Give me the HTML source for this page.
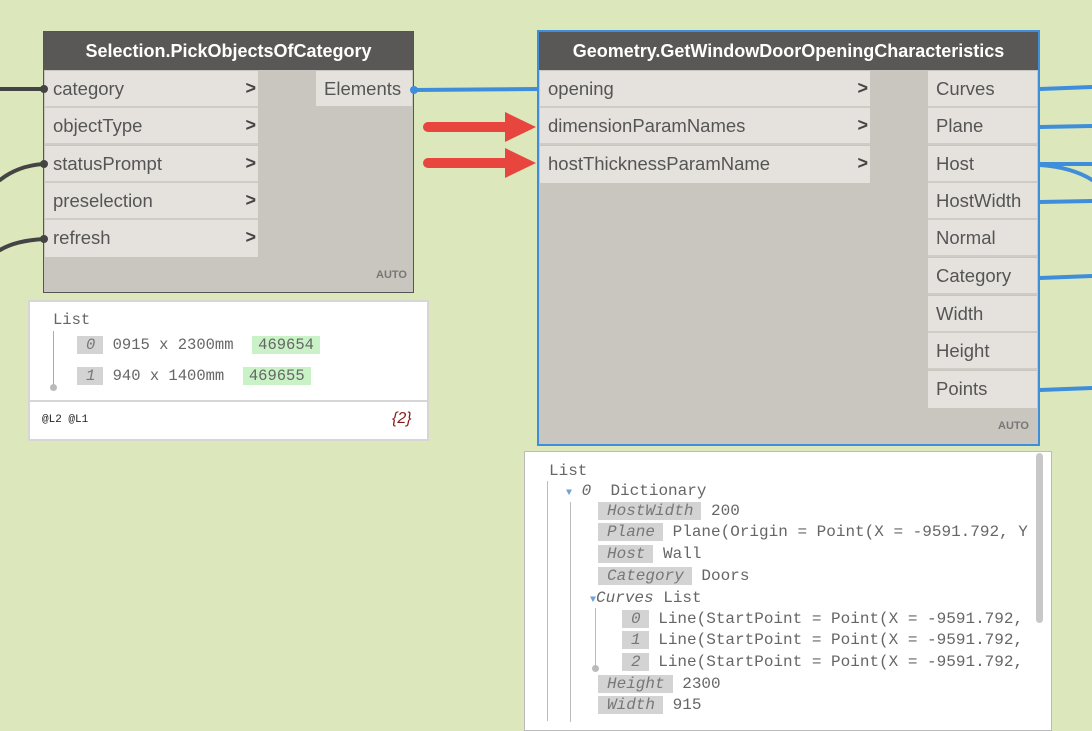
<!DOCTYPE html>
<html><head><meta charset="utf-8"><style>
*{margin:0;padding:0;box-sizing:border-box}
body{width:1092px;height:717px;background:#dce7bb;position:relative;overflow:hidden;font-family:"Liberation Sans",sans-serif}
.a{position:absolute}
.hdr{background:#5a5856;color:#fff;font-weight:bold;font-size:18px;text-align:center;line-height:38px;white-space:nowrap}
.row{position:absolute;background:#e5e2dd;color:#555;font-size:18.5px;line-height:35px;padding-left:8px;white-space:nowrap;border-bottom:2px solid #cfcbc5}
.chev{position:absolute;right:2px;top:0;font-weight:bold;color:#444;font-size:18px}
.body{background:#c9c5bf}
.auto{position:absolute;font-size:11px;font-weight:bold;color:#777}
.mono{font-family:"Liberation Mono",monospace;color:#666;font-size:16px;white-space:nowrap}
.key{background:#d3d3d3;font-style:italic;color:#777;padding:0 8px 0 9px}
.grn{background:#c9f2c6;padding:0 6px}
</style></head><body>
<svg class="a" style="left:0;top:0" width="1092" height="717">
<g fill="none" stroke-linecap="round">
<path d="M0 89 L44 89" stroke="#444" stroke-width="4"/>
<path d="M0 180 C10 172 25 165 44 164" stroke="#444" stroke-width="4"/>
<path d="M0 250 C10 244 25 240 44 239" stroke="#444" stroke-width="4"/>
<path d="M413 90 L538 89" stroke="#3e8edb" stroke-width="4"/>
<path d="M1040 89 L1092 87" stroke="#3e8edb" stroke-width="4"/>
<path d="M1040 127 L1092 126" stroke="#3e8edb" stroke-width="4"/>
<path d="M1040 164 L1092 164" stroke="#3e8edb" stroke-width="4"/>
<path d="M1040 165 C1060 166 1080 172 1092 180" stroke="#3e8edb" stroke-width="4"/>
<path d="M1040 202 L1092 201" stroke="#3e8edb" stroke-width="4"/>
<path d="M1040 278 L1092 276" stroke="#3e8edb" stroke-width="4"/>
<path d="M1040 390 L1092 388" stroke="#3e8edb" stroke-width="4"/>
<path d="M428 127 L505 127" stroke="#e8453f" stroke-width="10"/>
<path d="M428 163 L505 163" stroke="#e8453f" stroke-width="10"/>
</g>
<polygon points="505,112 536,127 505,142" fill="#e8453f"/>
<polygon points="505,148 536,163 505,178" fill="#e8453f"/>
</svg>

<div class="a body" style="left:43px;top:31px;width:371px;height:262px;border:1px solid #555"></div>
<div class="a hdr" style="left:44px;top:32px;width:369px">Selection.PickObjectsOfCategory</div>
<div class="row" style="left:45px;top:71px;width:213px">category<span class="chev">&gt;</span></div>
<div class="row" style="left:45px;top:108px;width:213px">objectType<span class="chev">&gt;</span></div>
<div class="row" style="left:45px;top:146px;width:213px">statusPrompt<span class="chev">&gt;</span></div>
<div class="row" style="left:45px;top:183px;width:213px">preselection<span class="chev">&gt;</span></div>
<div class="row" style="left:45px;top:220px;width:213px;border-bottom:none;height:37px">refresh<span class="chev">&gt;</span></div>
<div class="row" style="left:316px;top:71px;width:96px;border:none;height:35px">Elements</div>
<div class="auto" style="left:376px;top:269px">AUTO</div>
<div class="a" style="left:40px;top:85px;width:8px;height:8px;border-radius:4px;background:#444"></div>
<div class="a" style="left:40px;top:160px;width:8px;height:8px;border-radius:4px;background:#444"></div>
<div class="a" style="left:40px;top:235px;width:8px;height:8px;border-radius:4px;background:#444"></div>
<div class="a" style="left:410px;top:86px;width:8px;height:8px;border-radius:4px;background:#3e8edb"></div>

<div class="a" style="left:28px;top:300px;width:401px;height:141px;background:#fff;border:2px solid #d6d6d6"></div>
<div class="a" style="left:30px;top:400px;width:397px;height:2px;background:#d6d6d6"></div>
<div class="a mono" style="left:53px;top:311px;font-size:15.5px">List</div>
<div class="a" style="left:53px;top:331px;width:1px;height:54px;background:#aaa"></div>
<div class="a" style="left:50px;top:384px;width:7px;height:7px;border-radius:4px;background:#bbb"></div>
<div class="a mono" style="left:77px;top:336px;font-size:15.5px"><span class="key">0</span> 0915 x 2300mm&nbsp; <span class="grn">469654</span></div>
<div class="a mono" style="left:77px;top:367px;font-size:15.5px"><span class="key">1</span> 940 x 1400mm&nbsp; <span class="grn">469655</span></div>
<div class="a" style="left:42px;top:414px;font-family:'Liberation Mono',monospace;font-size:11px;color:#222">@L2 @L1</div>
<div class="a" style="left:392px;top:410px;font-size:16px;font-style:italic;color:#8a1a1a">{2}</div>

<div class="a body" style="left:537px;top:30px;width:503px;height:416px;border:2px solid #3e8edb"></div>
<div class="a hdr" style="left:539px;top:32px;width:499px">Geometry.GetWindowDoorOpeningCharacteristics</div>
<div class="row" style="left:540px;top:71px;width:330px">opening<span class="chev">&gt;</span></div>
<div class="row" style="left:540px;top:108px;width:330px">dimensionParamNames<span class="chev">&gt;</span></div>
<div class="row" style="left:540px;top:146px;width:330px;border-bottom:none;height:37px">hostThicknessParamName<span class="chev">&gt;</span></div>
<div class="row" style="left:928px;top:71px;width:109px">Curves</div>
<div class="row" style="left:928px;top:108px;width:109px">Plane</div>
<div class="row" style="left:928px;top:146px;width:109px">Host</div>
<div class="row" style="left:928px;top:183px;width:109px">HostWidth</div>
<div class="row" style="left:928px;top:220px;width:109px">Normal</div>
<div class="row" style="left:928px;top:258px;width:109px">Category</div>
<div class="row" style="left:928px;top:296px;width:109px">Width</div>
<div class="row" style="left:928px;top:333px;width:109px">Height</div>
<div class="row" style="left:928px;top:371px;width:109px;border:none;height:37px">Points</div>
<div class="auto" style="left:998px;top:420px">AUTO</div>

<div class="a" style="left:524px;top:451px;width:528px;height:280px;background:#fff;border:1px solid #bbb"></div>
<div class="a" style="left:547px;top:481px;width:1px;height:240px;background:#bbb"></div>
<div class="a" style="left:570px;top:502px;width:1px;height:220px;background:#bbb"></div>
<div class="a" style="left:595px;top:608px;width:1px;height:60px;background:#bbb"></div>
<div class="a" style="left:592px;top:665px;width:7px;height:7px;border-radius:4px;background:#bbb"></div>
<div class="a mono" style="left:549px;top:462px">List</div>
<div class="a mono" style="left:566px;top:482px"><span style="color:#6fa0d8;font-size:10px">▼</span> <i>0</i>&nbsp; Dictionary</div>
<div class="a mono" style="left:598px;top:502px"><span class="key">HostWidth</span> 200</div>
<div class="a mono" style="left:598px;top:523px"><span class="key">Plane</span> Plane(Origin = Point(X = -9591.792, Y</div>
<div class="a mono" style="left:598px;top:545px"><span class="key">Host</span> Wall</div>
<div class="a mono" style="left:598px;top:567px"><span class="key">Category</span> Doors</div>
<div class="a mono" style="left:590px;top:589px"><span style="color:#6fa0d8;font-size:10px">▼</span><i>Curves</i> List</div>
<div class="a mono" style="left:622px;top:610px"><span class="key">0</span> Line(StartPoint = Point(X = -9591.792,</div>
<div class="a mono" style="left:622px;top:631px"><span class="key">1</span> Line(StartPoint = Point(X = -9591.792,</div>
<div class="a mono" style="left:622px;top:653px"><span class="key">2</span> Line(StartPoint = Point(X = -9591.792,</div>
<div class="a mono" style="left:598px;top:675px"><span class="key">Height</span> 2300</div>
<div class="a mono" style="left:598px;top:696px"><span class="key">Width</span> 915</div>
<div class="a" style="left:1036px;top:453px;width:7px;height:170px;border-radius:4px;background:#c8c8c8"></div>
<div class="a" style="left:1052px;top:451px;width:40px;height:266px;background:#dce7bb"></div>
</body></html>
